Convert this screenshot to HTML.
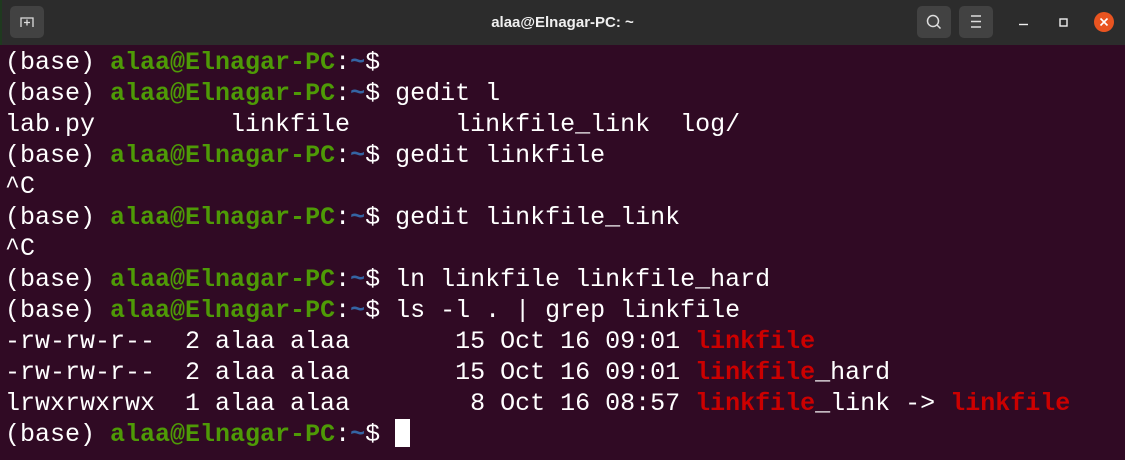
<!DOCTYPE html>
<html><head><style>
html,body{margin:0;padding:0;width:1125px;height:460px;overflow:hidden;background:#300a24;}
.tb{position:absolute;left:0;top:0;width:1125px;height:45px;background:#2c2c2c;}
.btn{position:absolute;top:6px;width:34px;height:32px;background:#424242;border-radius:5px;}
.title{position:absolute;top:0;width:1125px;text-align:center;font:bold 15px "Liberation Sans",sans-serif;line-height:45px;color:#f0f0f0;}
.term{position:absolute;left:5px;top:47px;font:25px/31px "Liberation Mono",monospace;color:#fff;white-space:pre;letter-spacing:0;}
.g{color:#4e9a06;font-weight:bold}.b{color:#3465a4;font-weight:bold}.r{color:#cc0000;font-weight:bold}
.cur{display:inline-block;width:15px;height:28px;background:#fff;vertical-align:-6px;}
.edge{position:absolute;left:0;top:0;width:2px;height:45px;background:#1f3a1f;}
</style></head><body>
<div class="tb">
<div class="edge"></div>
<div class="btn" style="left:10px"><svg width="34" height="32"><path d="M11 21V12h12v9" fill="none" stroke="#ddd" stroke-width="1.3"/><path d="M14 16.5h6M17 13.5v6" stroke="#ddd" stroke-width="1.3"/></svg></div>
<div class="title">alaa@Elnagar-PC: ~</div>
<div class="btn" style="left:917px"><svg width="34" height="32"><circle cx="16" cy="15" r="5.5" fill="none" stroke="#ddd" stroke-width="1.5"/><path d="M20 19l3.5 3.5" stroke="#ddd" stroke-width="1.5"/></svg></div>
<div class="btn" style="left:959px"><svg width="34" height="32"><path d="M12 10h10M12 15.5h10M12 21h10" stroke="#ddd" stroke-width="1.4"/></svg></div>
<svg style="position:absolute;left:1010px;top:10px" width="100" height="26"><path d="M9 14.5h9" stroke="#eee" stroke-width="1.4"/><rect x="50" y="9" width="7" height="7" fill="none" stroke="#eee" stroke-width="1.4"/></svg>
<div style="position:absolute;left:1094px;top:12px;width:20px;height:20px;border-radius:50%;background:#e95420"><svg width="20" height="20"><path d="M6.5 6.5l7 7M13.5 6.5l-7 7" stroke="#fff" stroke-width="1.6"/></svg></div>
</div>
<div class="term">(base) <span class="g">alaa@Elnagar-PC</span>:<span class="b">~</span>$
(base) <span class="g">alaa@Elnagar-PC</span>:<span class="b">~</span>$ gedit l
lab.py         linkfile       linkfile_link  log/
(base) <span class="g">alaa@Elnagar-PC</span>:<span class="b">~</span>$ gedit linkfile
^C
(base) <span class="g">alaa@Elnagar-PC</span>:<span class="b">~</span>$ gedit linkfile_link
^C
(base) <span class="g">alaa@Elnagar-PC</span>:<span class="b">~</span>$ ln linkfile linkfile_hard
(base) <span class="g">alaa@Elnagar-PC</span>:<span class="b">~</span>$ ls -l . | grep linkfile
-rw-rw-r--  2 alaa alaa       15 Oct 16 09:01 <span class="r">linkfile</span>
-rw-rw-r--  2 alaa alaa       15 Oct 16 09:01 <span class="r">linkfile</span>_hard
lrwxrwxrwx  1 alaa alaa        8 Oct 16 08:57 <span class="r">linkfile</span>_link -&gt; <span class="r">linkfile</span>
(base) <span class="g">alaa@Elnagar-PC</span>:<span class="b">~</span>$ <span class="cur"></span></div>
</body></html>
